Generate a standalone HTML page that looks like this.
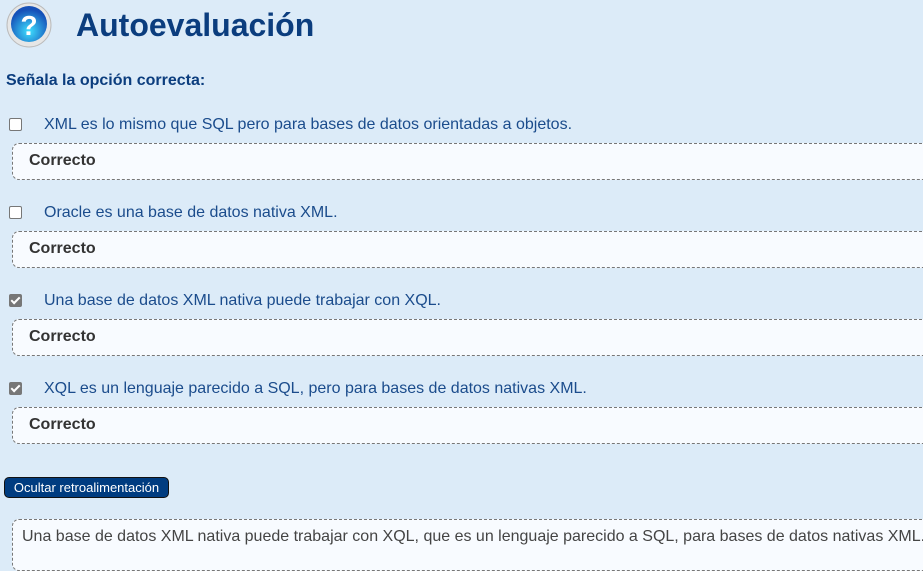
<!DOCTYPE html>
<html><head><meta charset="utf-8"><style>
body{margin:0;width:923px;height:552px;overflow:hidden;background:#dcebf8;font-family:"Liberation Sans",sans-serif;position:relative}
.a{position:absolute}
h1{position:absolute;left:76px;top:7px;margin:0;font-size:32px;font-weight:bold;color:#0b3d7e}
.sub{left:6px;top:72px;font-size:16px;font-weight:bold;color:#0b3d7e}
.cb{position:absolute;left:9px;width:11px;height:11px;border:1px solid #777;border-radius:2px;background:#fff}
.cb.on{background:#777;border-color:#777}
.cb.on:after{content:"";position:absolute;left:3px;top:0px;width:3px;height:7px;border:solid #fff;border-width:0 2px 2px 0;transform:rotate(45deg)}
.q{position:absolute;left:44px;font-size:16px;color:#1b4c8c}
.box{position:absolute;left:12px;width:930px;height:35px;border:1px dashed #777;border-radius:7px;background:#f8fbff}
.box b{position:absolute;left:16px;top:8px;font-size:16px;color:#333}
.btn{left:4px;top:477px;width:163px;height:19px;background:#003c80;border:1.5px solid #111;border-radius:5px;color:#fff;font-size:13px;line-height:19px;text-align:center}
.fb{left:12px;top:519px;width:930px;height:50px;border:1px dashed #777;border-radius:7px;background:#f8fbff}
.fb span{position:absolute;left:9px;top:8px;font-size:16px;color:#444;white-space:nowrap}
</style></head><body>
<svg class="a" style="left:5px;top:1px" width="48" height="48" viewBox="0 0 48 48">
<defs><radialGradient id="g" cx="50%" cy="70%" r="60%"><stop offset="0" stop-color="#3fe0ff"/><stop offset="1" stop-color="#1550b8"/></radialGradient></defs>
<circle cx="24" cy="24" r="22" fill="#e6e6e6" stroke="#bbb"/>
<circle cx="24" cy="23" r="18" fill="url(#g)"/>
<text x="24" y="34" font-size="28" font-weight="bold" fill="#fff" text-anchor="middle" font-family="Liberation Sans">?</text>
</svg>
<h1>Autoevaluación</h1>
<div class="a sub">Señala la opción correcta:</div>

<div class="cb" style="top:118px"></div><div class="q" style="top:116px">XML es lo mismo que SQL pero para bases de datos orientadas a objetos.</div>
<div class="box" style="top:143px"><b>Correcto</b></div>
<div class="cb" style="top:206px"></div><div class="q" style="top:204px">Oracle es una base de datos nativa XML.</div>
<div class="box" style="top:231px"><b>Correcto</b></div>
<div class="cb on" style="top:294px"></div><div class="q" style="top:292px">Una base de datos XML nativa puede trabajar con XQL.</div>
<div class="box" style="top:319px"><b>Correcto</b></div>
<div class="cb on" style="top:382px"></div><div class="q" style="top:380px">XQL es un lenguaje parecido a SQL, pero para bases de datos nativas XML.</div>
<div class="box" style="top:407px"><b>Correcto</b></div>

<div class="a btn">Ocultar retroalimentación</div>
<div class="a fb"><span>Una base de datos XML nativa puede trabajar con XQL, que es un lenguaje parecido a SQL, para bases de datos nativas XML.</span></div>
</body></html>
